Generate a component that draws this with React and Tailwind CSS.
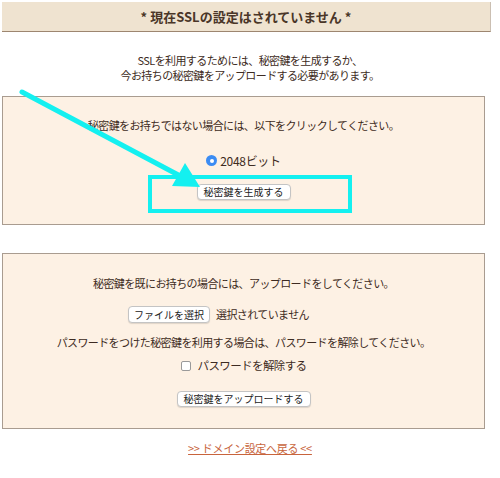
const font = { fontFamily: '"Noto Sans CJK JP", "Noto Sans", sans-serif' }

function MacButton({ children, className = '' }) {
  return (
    <button
      type="button"
      className={`inline-flex h-[16px] items-center justify-center whitespace-nowrap rounded-[4px] border border-[#c4c4c4] bg-white px-[6px] text-[10px] leading-none tracking-[0px] text-[#222] shadow-[0_1px_1px_rgba(0,0,0,0.12)] ${className}`}
    >
      {children}
    </button>
  )
}

function Arrow() {
  return (
    <svg className="pointer-events-none absolute left-0 top-0" width="500" height="478" viewBox="0 0 500 478">
      <line x1="22" y1="92" x2="184" y2="178" stroke="#14f0f0" strokeWidth="5" strokeLinecap="round" />
      <polygon points="200,187 172,186 185,163" fill="#14f0f0" />
    </svg>
  )
}

export default function App() {
  return (
    <div className="relative h-[478px] w-[500px] overflow-hidden bg-white text-[#3d2b22]" style={font}>
      <div className="ml-[2px] mt-[2px] flex h-[30px] w-[489px] items-center justify-center border-b-[1.5px] border-r border-b-[#9d8670] border-r-[#cbbfb2] bg-[#efe3d0] text-[13px] font-bold text-[#4a3628]">
        * 現在SSLの設定はされていません *
      </div>

      <div className="mt-[21px] text-center text-[11px] leading-[15px] tracking-[-0.6px]">
        <p>SSLを利用するためには、秘密鍵を生成するか、</p>
        <p>今お持ちの秘密鍵をアップロードする必要があります。</p>
      </div>

      <div className="ml-[2px] mt-[13px] w-[483px] border border-[#a99c90] bg-[#fdf1e4] pb-[24px] pt-[21px] text-center text-[11px] tracking-[-0.6px]">
        <p className="leading-[15px]">秘密鍵をお持ちではない場合には、以下をクリックしてください。</p>
        <div className="mt-[20px] flex h-[15px] items-center justify-center gap-[3px]">
          <span className="flex h-[11px] w-[11px] items-center justify-center rounded-full bg-[#3b8cf3]">
            <span className="h-[4px] w-[4px] rounded-full bg-white" />
          </span>
          <span className="text-[12px] tracking-[-0.3px]">2048ビット</span>
        </div>
        <div className="mt-[16px] flex justify-center">
          <MacButton>秘密鍵を生成する</MacButton>
        </div>
      </div>

      <div className="ml-[2px] mt-[28px] w-[483px] border border-[#a99c90] bg-[#fdf1e4] pb-[21px] pt-[22px] text-center text-[11px] tracking-[-0.6px]">
        <p className="leading-[15px]">秘密鍵を既にお持ちの場合には、アップロードをしてください。</p>
        <div className="mt-[15px] flex items-center justify-center gap-[6px] pr-[50px]">
          <MacButton className="h-[17px] w-[82px] px-0">ファイルを選択</MacButton>
          <span className="whitespace-nowrap">選択されていません</span>
        </div>
        <p className="mt-[12px] leading-[15px]">パスワードをつけた秘密鍵を利用する場合は、パスワードを解除してください。</p>
        <div className="mt-[8px] flex h-[15px] items-center justify-center gap-[7px]">
          <span className="h-[10px] w-[10px] rounded-[2px] border border-[#9a9a9a] bg-white" />
          <span className="text-[11.5px]">パスワードを解除する</span>
        </div>
        <div className="mt-[18px] flex justify-center">
          <MacButton className="px-[6px]">秘密鍵をアップロードする</MacButton>
        </div>
      </div>

      <div className="mt-[5px] text-center">
        <a href="#" className="text-[11px] tracking-[-0.3px] text-[#c8643c] underline">
          &gt;&gt; ドメイン設定へ戻る &lt;&lt;
        </a>
      </div>

      <div className="pointer-events-none absolute left-[148px] top-[175px] h-[38px] w-[204px] border-[4px] border-[#14f0f0]" />
      <Arrow />
    </div>
  )
}
